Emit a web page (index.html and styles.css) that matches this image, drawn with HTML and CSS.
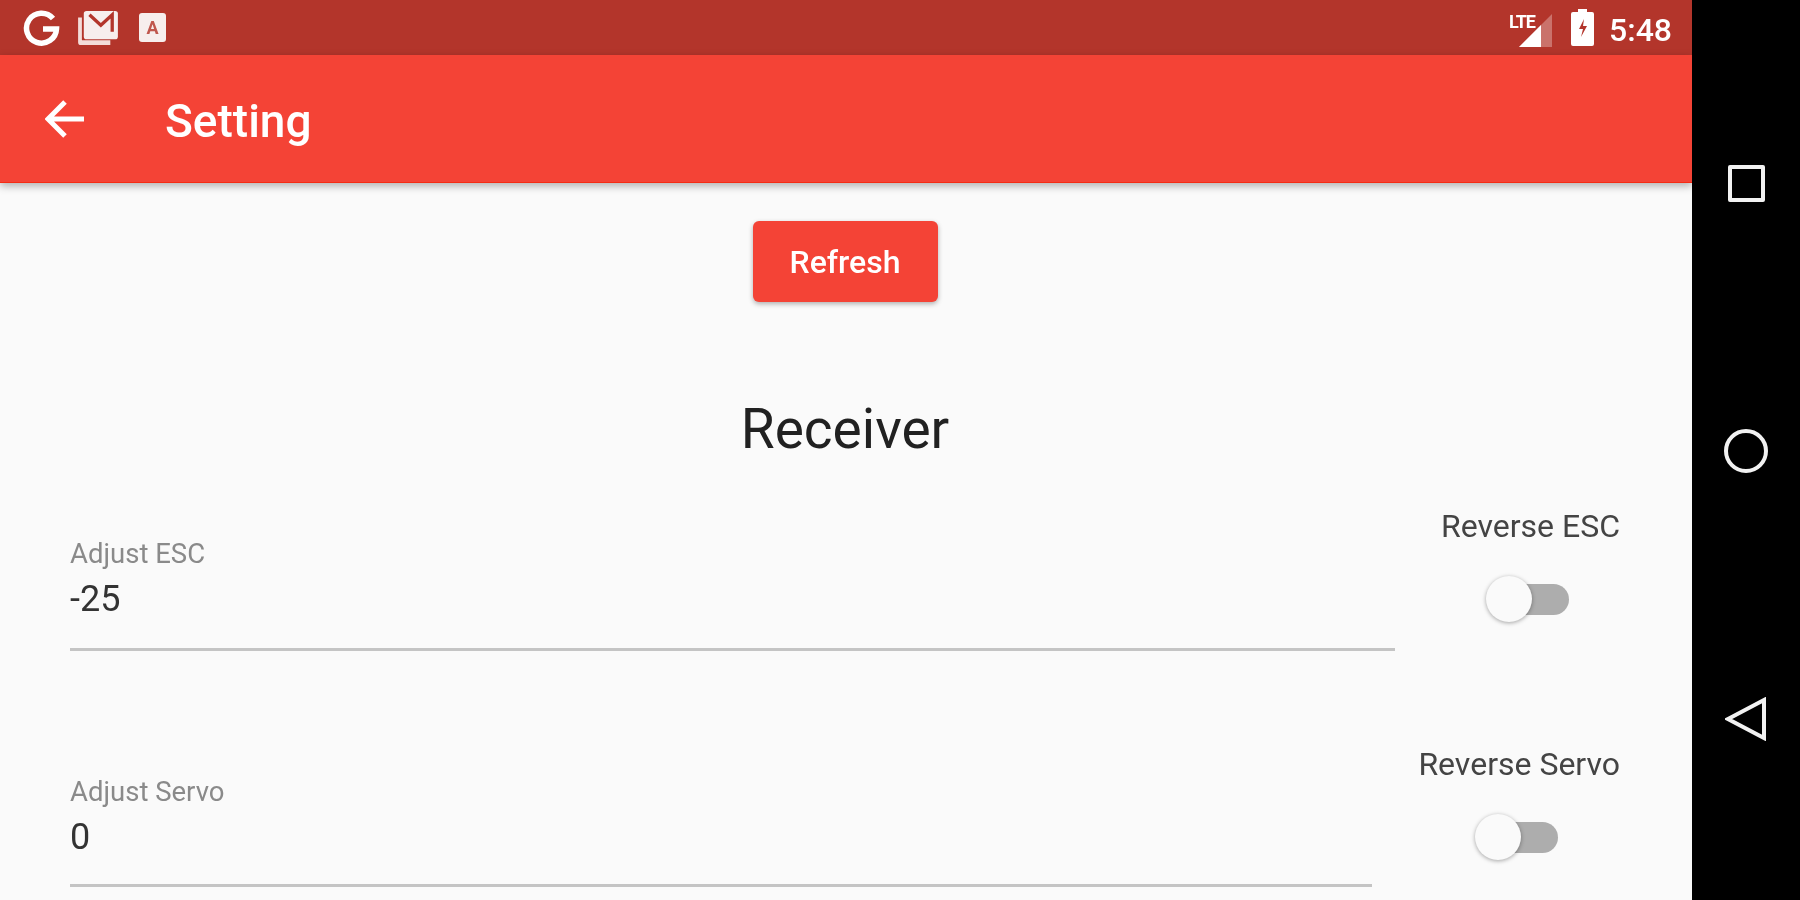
FILE: index.html
```html
<!DOCTYPE html>
<html lang="en">
<head>
  <meta charset="UTF-8" />
  <title>Setting</title>
  <link rel="stylesheet" href="styles.css">
</head>
<body>
  <div class="screen">
    <div class="status-bar">
      <div class="status-left">
        <svg class="icon-g" width="40" height="40" viewBox="0 0 40 40">
          <path d="M31 10.5A15 15 0 1 0 34.5 21H21" fill="none" stroke="#fff" stroke-width="5.5"/>
        </svg>
        <svg class="icon-mail" width="40" height="36" viewBox="0 0 42 38">
          <path d="M0 8h4v24h30v5H3a3 3 0 0 1-3-3z" fill="#f3dcd9"/>
          <path d="M6 4a3 3 0 0 1 3-3h30a3 3 0 0 1 3 3v24a3 3 0 0 1-3 3H9a3 3 0 0 1-3-3z" fill="#f7eeed"/>
          <path d="M12 5l12 11L36 5v18" fill="none" stroke="#b3352b" stroke-width="3.5"/>
        </svg>
        <div class="icon-a">A</div>
      </div>
      <div class="status-right">
        <div class="signal">
          <span class="lte">LTE</span>
          <svg width="34" height="34" viewBox="0 0 34 34">
            <path d="M33 1v33H0z" fill="#fff" fill-opacity=".3"/>
            <path d="M22 12v22H0z" fill="#fff"/>
          </svg>
        </div>
        <svg class="battery" width="23" height="37" viewBox="0 0 23 37">
          <path d="M7 0h9v3h5a2 2 0 0 1 2 2v30a2 2 0 0 1-2 2H2a2 2 0 0 1-2-2V5a2 2 0 0 1 2-2h5z" fill="#fff"/>
          <path d="M13 10l-5 10h4l-2 8 6-11h-4z" fill="#b3352b"/>
        </svg>
        <span class="clock">5:48</span>
      </div>
    </div>

    <div class="app-bar">
      <svg class="back" width="40" height="38" viewBox="0 0 40 38">
        <path d="M39 19H4M20 2L3 19l17 17" fill="none" stroke="#fff" stroke-width="5"/>
      </svg>
      <h1>Setting</h1>
    </div>

    <div class="content">
      <button class="refresh">Refresh</button>
      <h2>Receiver</h2>

      <div class="row">
        <div class="field">
          <div class="field-label">Adjust ESC</div>
          <div class="field-value">-25</div>
        </div>
        <div class="toggle">
          <div class="toggle-label">Reverse ESC</div>
          <div class="switch"><div class="thumb"></div></div>
        </div>
      </div>

      <div class="row">
        <div class="field field-servo">
          <div class="field-label">Adjust Servo</div>
          <div class="field-value">0</div>
        </div>
        <div class="toggle">
          <div class="toggle-label">Reverse Servo</div>
          <div class="switch"><div class="thumb"></div></div>
        </div>
      </div>
    </div>
  </div>

  <!-- Android nav buttons -->
  <div class="nav-bar">
    <div class="nav-square"></div>
    <div class="nav-circle"></div>
    <svg class="nav-back" width="42" height="44" viewBox="0 0 42 44">
      <path d="M3 22L39 3v38z" fill="none" stroke="#f2f2f2" stroke-width="4"/>
    </svg>
  </div>
</body>
</html>
```

FILE: styles.css
```css
html, body {
  margin: 0;
  padding: 0;
  height: 100%;
  overflow: hidden;
}

body {
  display: flex;
  font-family: Roboto, sans-serif;
  background: #000;
}

.screen {
  width: 1692px;
  height: 900px;
  display: flex;
  flex-direction: column;
  background: #fafafa;
  overflow: hidden;
  filter: blur(0.6px);
}

/* Status bar */
.status-bar {
  height: 55px;
  flex: none;
  display: flex;
  align-items: center;
  justify-content: space-between;
  padding: 0 20px 0 22px;
  background: #b3352b;
  color: #fff;
}
.status-left, .status-right {
  display: flex;
  align-items: center;
}
.icon-mail {
  margin-left: 16px;
}
.icon-a {
  width: 27px;
  height: 29px;
  margin-left: 21px;
  border-radius: 3px;
  background: #f7eeed;
  color: #c0574e;
  font-size: 18px;
  font-weight: 700;
  line-height: 29px;
  text-align: center;
}
.signal {
  display: flex;
  align-items: flex-end;
  height: 34px;
  margin-right: 18px;
  padding-top: 4px;
}
.lte {
  font-size: 18px;
  font-weight: 700;
  line-height: 18px;
  letter-spacing: -1px;
  align-self: flex-start;
  margin-right: -16px;
}
.clock {
  margin: 4px 0 0 15px;
  font-size: 32px;
  font-weight: 500;
}

/* App bar */
.app-bar {
  height: 127px;
  flex: none;
  display: flex;
  align-items: center;
  padding-left: 45px;
  background: #f44336;
  border-bottom: 1px solid #f52c14;
  box-shadow: 0 3px 8px rgba(0, 0, 0, 0.3);
  position: relative;
}
.app-bar h1 {
  margin: 4px 0 0 80px;
  color: #fff;
  font-size: 46px;
  font-weight: 500;
}

/* Content */
.content {
  display: flex;
  flex-direction: column;
  align-items: center;
  padding: 38px 72px 0 70px;
}
.refresh {
  width: 185px;
  height: 81px;
  border: 0;
  border-radius: 6px;
  background: #f44336;
  color: #fff;
  font-family: Roboto, sans-serif;
  font-size: 32px;
  font-weight: 500;
  box-shadow: 0 2px 5px rgba(0, 0, 0, 0.3);
}
.content h2 {
  margin: 95px 0 0;
  color: #212121;
  font-size: 55px;
  font-weight: 400;
  line-height: 64px;
}

.row {
  align-self: stretch;
  display: flex;
  gap: 46px;
  height: 238px;
}
.row:first-of-type {
  margin-top: 47px;
}
.field {
  flex: 1;
  height: 143px;
  display: flex;
  flex-direction: column;
  border-bottom: 3px solid #c4c4c4;
  box-sizing: border-box;
  padding-top: 31px;
}
.field-servo {
  height: 141px;
}
.field-label {
  color: #8a8a8a;
  font-size: 27.5px;
  line-height: 30px;
}
.field-value {
  margin-top: 8px;
  color: #333;
  font-size: 36px;
  line-height: 44px;
}
.toggle {
  display: flex;
  flex-direction: column;
  align-items: center;
}
.toggle-label {
  color: #444;
  font-size: 32px;
  line-height: 36px;
}
.switch {
  position: relative;
  width: 78px;
  height: 31px;
  margin-top: 40px;
  border-radius: 16px;
  background: #adadad;
}
/* thumb sits over the track */
.thumb {
  position: absolute;
  left: -5px;
  top: -8px;
  width: 46px;
  height: 46px;
  border-radius: 50%;
  background: #fafafa;
  box-shadow: 0 1px 4px rgba(0, 0, 0, 0.35);
}

/* Nav bar */
.nav-bar {
  width: 108px;
  height: 900px;
  display: flex;
  flex-direction: column;
  align-items: center;
  padding-top: 165px;
  box-sizing: border-box;
  background: #000;
}
.nav-square {
  width: 37px;
  height: 37px;
  border: 4px solid #f2f2f2;
  border-radius: 2px;
  box-sizing: border-box;
}
.nav-circle {
  width: 44px;
  height: 44px;
  margin-top: 227px;
  border: 4px solid #f2f2f2;
  border-radius: 50%;
  box-sizing: border-box;
}
.nav-back {
  margin-top: 224px;
}
```
